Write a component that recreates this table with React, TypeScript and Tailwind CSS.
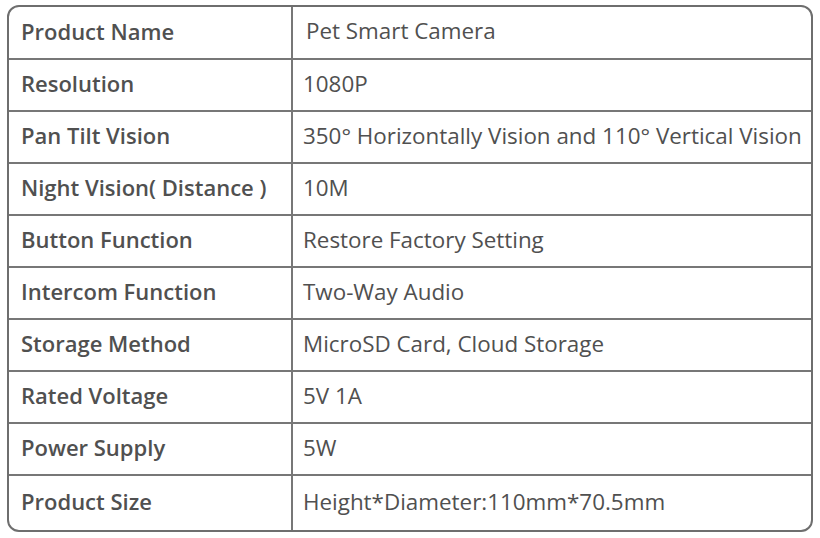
import React from "react";

const rows: [string, string][] = [
  ["Product Name", "Pet Smart Camera"],
  ["Resolution", "1080P"],
  ["Pan Tilt Vision", "350° Horizontally Vision and 110° Vertical Vision"],
  ["Night Vision( Distance )", "10M"],
  ["Button Function", "Restore Factory Setting"],
  ["Intercom Function", "Two-Way Audio"],
  ["Storage Method", "MicroSD Card, Cloud Storage"],
  ["Rated Voltage", "5V 1A"],
  ["Power Supply", "5W"],
  ["Product Size", "Height*Diameter:110mm*70.5mm"],
];

export default function App() {
  return (
    <div className="w-[820px] h-[538px] bg-white pt-[5px] pl-[7px]" style={{ fontFamily: '"Open Sans", sans-serif' }}>
      <div className="w-[806px] h-[527px] border-2 border-[#6e6e6e] rounded-[12px] overflow-hidden flex flex-col">
        {rows.map(([k, v], i) => (
          <div
            key={k}
            className={`flex ${i === rows.length - 1 ? "flex-1" : i === 0 ? "h-[53px] border-b-2 border-[#777]" : "h-[52px] border-b-2 border-[#777]"}`}
          >
            <div className="w-[284px] shrink-0 border-r-2 border-[#777] flex items-center pl-[12px] pb-[3px] text-[22px] font-semibold text-[#505050]">
              {k}
            </div>
            <div className={`flex-1 flex items-center ${i === 0 ? "pl-[13px]" : "pl-[10px]"} pb-[3px] text-[22.4px] text-[#505050] whitespace-nowrap`}>
              {v}
            </div>
          </div>
        ))}
      </div>
    </div>
  );
}
